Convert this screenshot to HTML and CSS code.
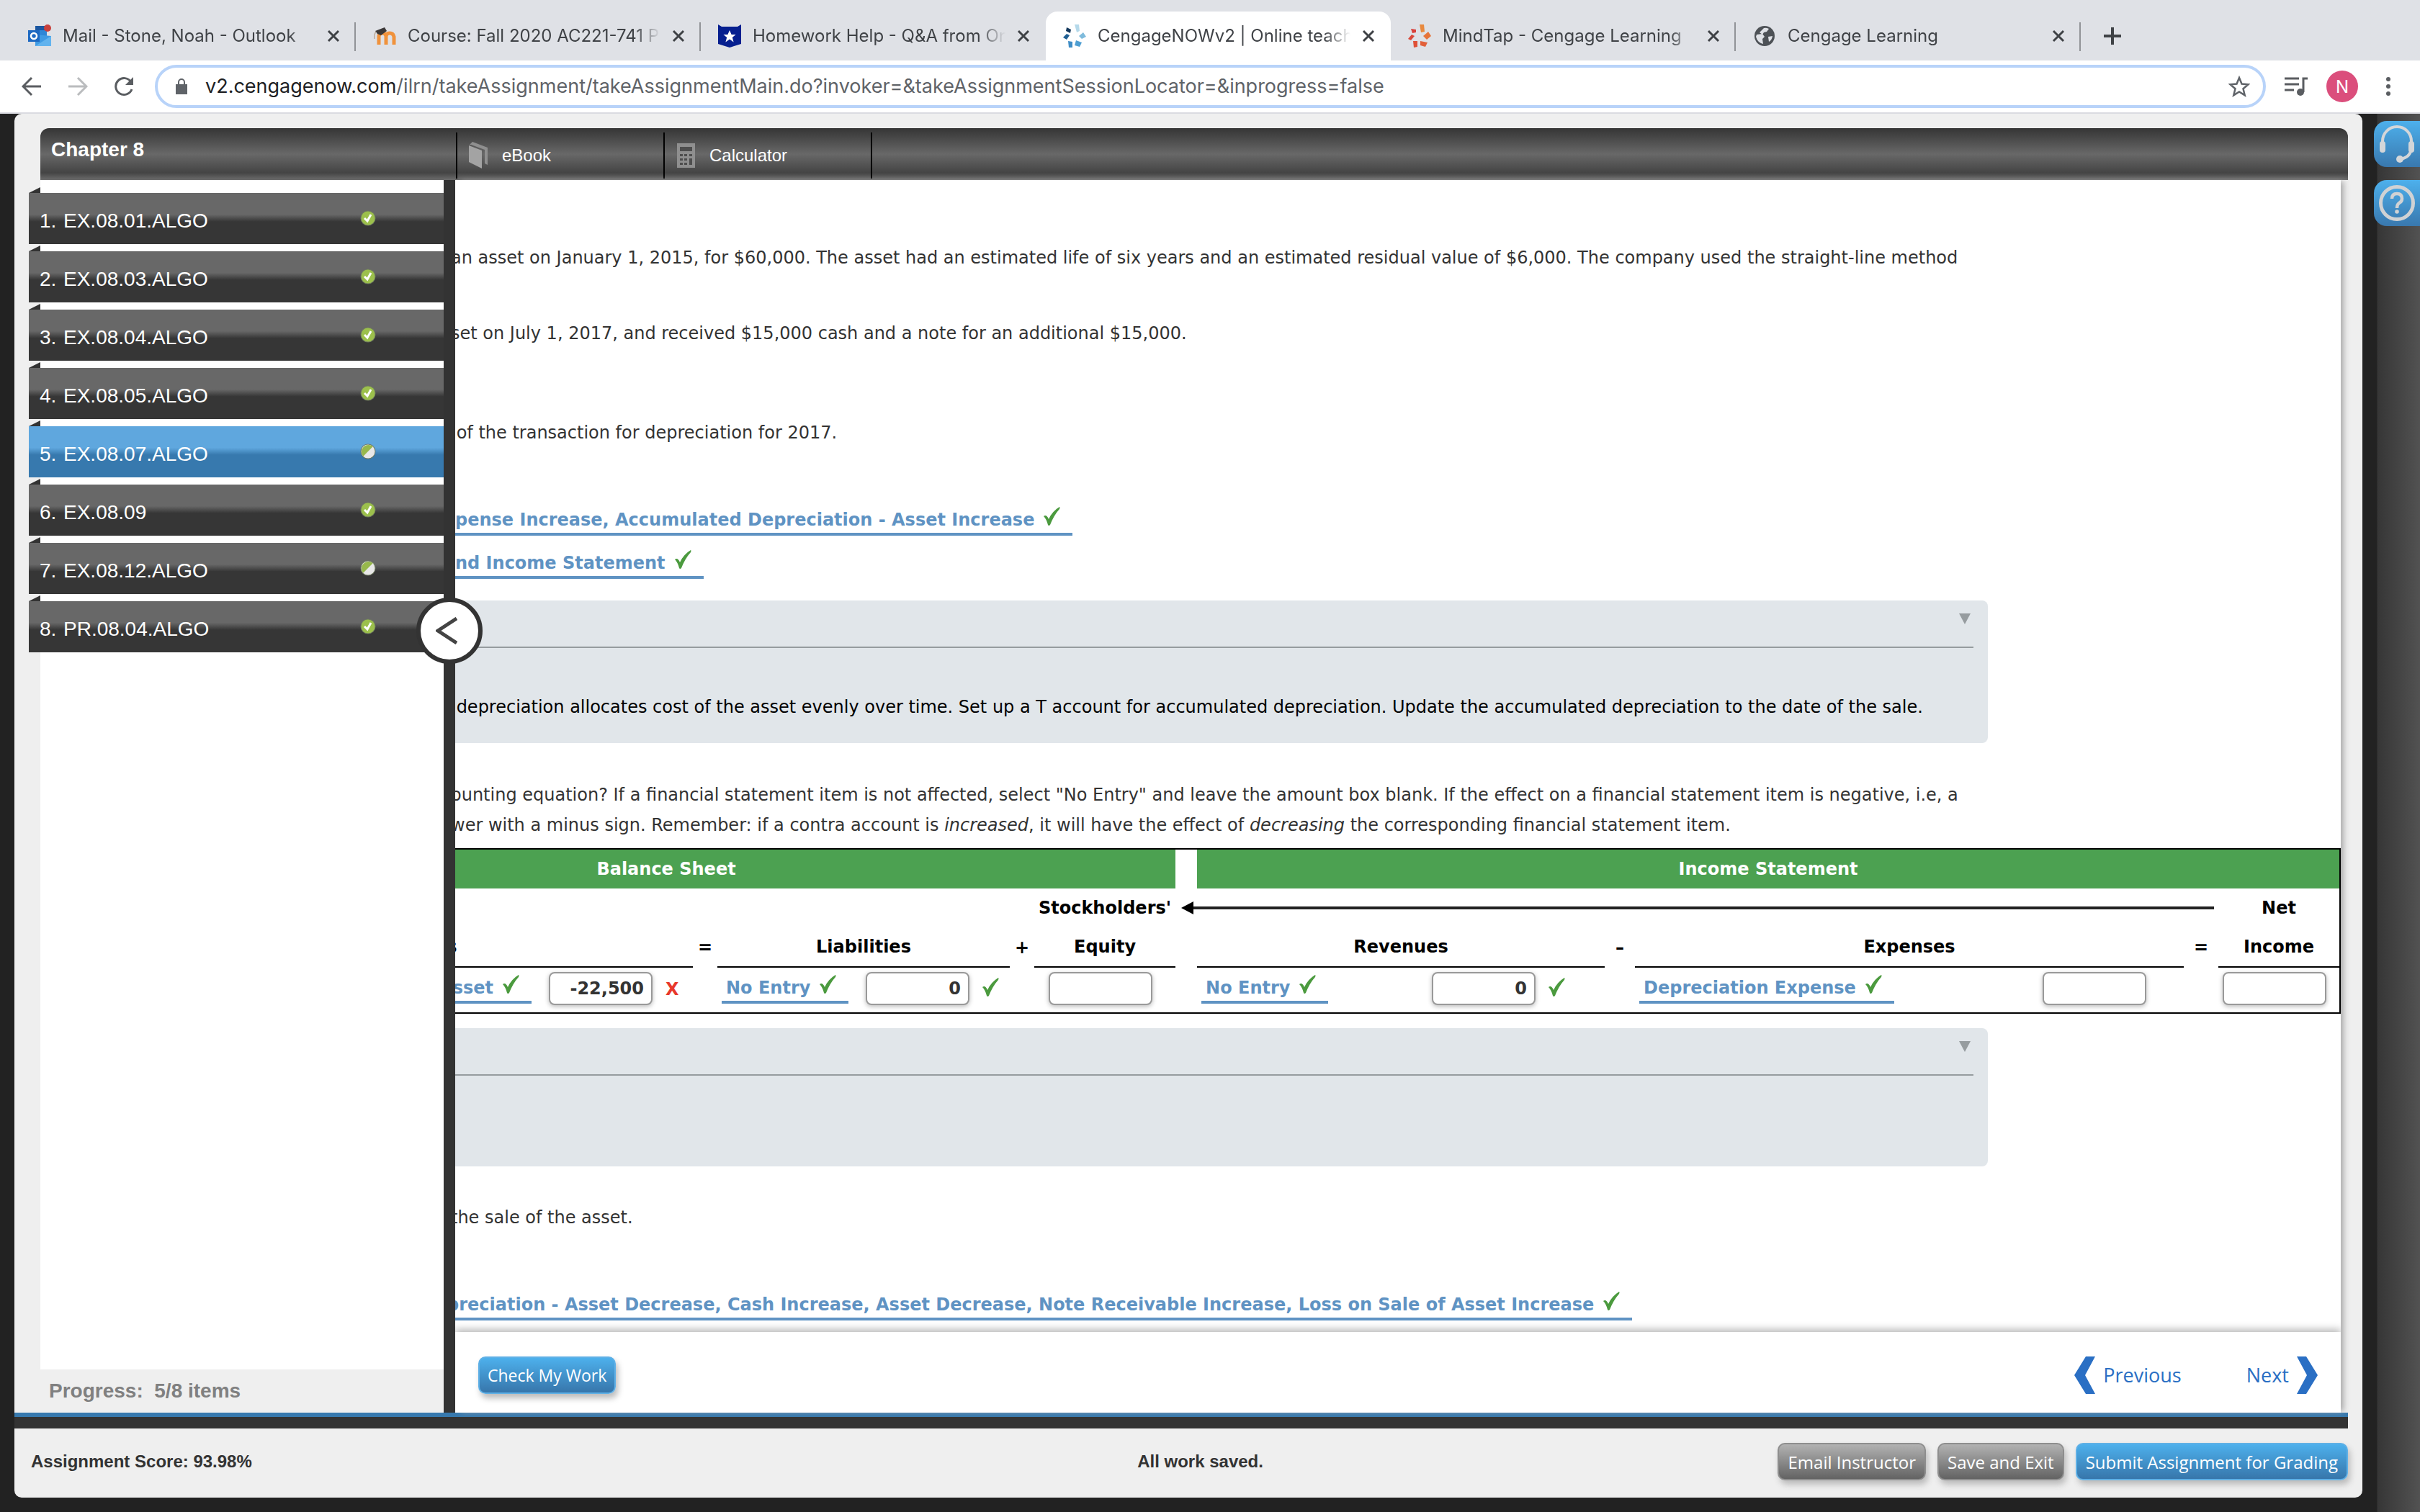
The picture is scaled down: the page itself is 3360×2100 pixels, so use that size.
FILE: index.html
```html
<!DOCTYPE html>
<html lang="en">
<head>
<meta charset="utf-8">
<title>CengageNOWv2 | Online teaching</title>
<link rel="stylesheet" href="styles.css">
</head>
<body>
<svg width="0" height="0" class="defs" aria-hidden="true">
  <symbol id="close" viewBox="0 0 18 18"><path d="M2 2L16 16M16 2L2 16" stroke="#3f4246" stroke-width="3" fill="none"/></symbol>
  <symbol id="check" viewBox="0 0 24 26"><path d="M1 13Q5 10 8 17Q13 6 23 0Q24 1 23 3Q15 12 10 25Q8 27 7 25Q5 17 1 13Z" fill="#4b9a3e"/></symbol>
  <symbol id="done" viewBox="0 0 22 22"><circle cx="11" cy="11" r="10.500" fill="#6f7a60"/><circle cx="11" cy="11" r="9.500" fill="#9cc04c"/><path d="M6 11L10 15L15 6" stroke="#fff" stroke-width="3" fill="none"/></symbol>
  <symbol id="half" viewBox="0 0 22 22"><circle cx="11" cy="11" r="10.500" fill="#6f7a60"/><circle cx="11" cy="11" r="9.500" fill="#e8e8e8"/><path d="M4.300 17.700A9.500 9.500 0 0 1 17.700 4.300Z" fill="#97b84c"/></symbol>
</svg>

<header class="browser">
  <div class="tabs" role="tablist">
    <div class="tab" role="tab">
      <svg class="fav" viewBox="0 0 32 32"><path d="M10 2h16v12H10z" fill="#1a56a0"/><path d="M16 8h10v10H16z" fill="#2f86d6"/><path d="M10 14l22 2v14H10z" fill="#3f9ae3"/><path d="M10 30l22-14v14z" fill="#62b3ee"/><path d="M0 8h16v16H0z" fill="#1d69c2"/><circle cx="8" cy="16" r="4" fill="none" stroke="#fff" stroke-width="2.500"/><circle cx="27" cy="5" r="5" fill="#c9403c"/></svg>
      <span class="title">Mail - Stone, Noah - Outlook</span>
      <button class="close" aria-label="Close tab"><svg viewBox="0 0 18 18"><use href="#close"/></svg></button>
    </div>
    <div class="tab" role="tab">
      <svg class="fav" viewBox="0 0 32 32"><path d="M8 28V17q0-5 5-5t5 5v11M18 17q0-5 5-5t6 5v11" stroke="#f0923c" stroke-width="5" fill="none"/><path d="M3 9L16 4L19 9L11 15L6 13Z" fill="#3b3838"/><path d="M4 10Q1 14 2 20" stroke="#b9a99a" stroke-width="1.500" fill="none"/></svg>
      <span class="title">Course: Fall 2020 AC221-741 P</span>
      <button class="close" aria-label="Close tab"><svg viewBox="0 0 18 18"><use href="#close"/></svg></button>
    </div>
    <div class="tab last-before" role="tab">
      <svg class="fav" viewBox="0 0 32 32"><path d="M0 0L5 3H27L32 0V27L16 32L0 27Z" fill="#061f8f"/><path d="M16 8l2.600 6h6l-4.800 4 1.800 6.500L16 20.500l-5.600 4L12.200 18l-4.800-4h6z" fill="#fff"/></svg>
      <span class="title">Homework Help - Q&amp;A from On</span>
      <button class="close" aria-label="Close tab"><svg viewBox="0 0 18 18"><use href="#close"/></svg></button>
    </div>
    <div class="tab active" role="tab" aria-selected="true">
      <svg class="fav" viewBox="0 0 32 32"><path d="M16 0h6l1 9-4 2z" fill="#b5d9ea"/><path d="M28 11l4 6-6 3-4-4z" fill="#7fbbdc"/><path d="M18 22l8 3-3 6-7-2z" fill="#4f9fd2"/><path d="M7 23l6 1v8H8z" fill="#3f8dc6"/><path d="M0 18l5-5 4 2-4 6z" fill="#1f5f93"/><path d="M5 4l6 3-1 5-6-3z" fill="#14385c"/></svg>
      <span class="title">CengageNOWv2 | Online teach</span>
      <button class="close" aria-label="Close tab"><svg viewBox="0 0 18 18"><use href="#close"/></svg></button>
    </div>
    <div class="tab" role="tab">
      <svg class="fav" viewBox="0 0 32 32"><path d="M16 0h6l1 10-5 1z" fill="#e8893e"/><path d="M28 10l4 6-6 5-5-5z" fill="#e6743a"/><path d="M17 23l10 2-3 6-7-2z" fill="#e2603a"/><path d="M7 23h6v8l-5 1z" fill="#df5138"/><path d="M0 20l5-6 4 2-5 6z" fill="#d9483a"/><path d="M4 6l7 1v4l-5 1z" fill="#d9403a"/></svg>
      <span class="title">MindTap - Cengage Learning</span>
      <button class="close" aria-label="Close tab"><svg viewBox="0 0 18 18"><use href="#close"/></svg></button>
    </div>
    <div class="tab" role="tab">
      <svg class="fav" viewBox="0 0 32 32"><circle cx="16" cy="16" r="14" fill="#4d5156"/><path d="M5 14l8-1 3 4-3 3 1 7Q6 25 4 17zM15 5q3-1 7 1l-3 4-4 1-2 3-4-3zM21 17l6-1q-1 6-5 8z" fill="#dfe1e6"/></svg>
      <span class="title">Cengage Learning</span>
      <button class="close" aria-label="Close tab"><svg viewBox="0 0 18 18"><use href="#close"/></svg></button>
    </div>
    <button class="newtab" aria-label="New tab"><svg viewBox="0 0 24 24"><path d="M12 0v24M0 12h24" stroke="#3f4246" stroke-width="4"/></svg></button>
  </div>
  <div class="toolbar">
    <button class="nav" aria-label="Back"><svg viewBox="0 0 28 28"><path d="M27 14H3M14 2L2 14L14 26" stroke="#5a5d61" stroke-width="3" fill="none"/></svg></button>
    <button class="nav" aria-label="Forward" disabled><svg viewBox="0 0 28 28"><path d="M1 14H25M14 2L26 14L14 26" stroke="#babcbe" stroke-width="3" fill="none"/></svg></button>
    <button class="nav" aria-label="Reload"><svg viewBox="0 0 28 28"><path d="M24 8A11.500 11.500 0 1 0 25 18" stroke="#5a5d61" stroke-width="3" fill="none"/><path d="M27 1V12H16Z" fill="#5a5d61"/></svg></button>
    <div class="omnibox">
      <svg class="lock" viewBox="0 0 16 22"><path d="M0 8h16v14H0z" fill="#5f6368"/><path d="M4 9V5a4 4 0 0 1 8 0v4" stroke="#5f6368" stroke-width="2" fill="none"/></svg>
      <div class="url" role="textbox" aria-label="Address"><b>v2.cengagenow.com</b>/ilrn/takeAssignment/takeAssignmentMain.do?invoker=&amp;takeAssignmentSessionLocator=&amp;inprogress=false</div>
      <button class="star" aria-label="Bookmark"><svg viewBox="0 0 30 30"><path d="M15 3l3.500 8.500 9 .8-7 6 2.200 9L15 22.500 7.300 27.300l2.200-9-7-6 9-.8z" stroke="#5f6368" stroke-width="2.500" fill="none"/></svg></button>
    </div>
    <button class="media" aria-label="Media"><svg viewBox="0 0 32 26"><path d="M0 2h20M0 10h20M0 18h13" stroke="#5a5d61" stroke-width="3"/><path d="M26 21V2h6" stroke="#5a5d61" stroke-width="3" fill="none"/><circle cx="22" cy="21" r="5" fill="#5a5d61"/></svg></button>
    <button class="avatar">N</button>
    <button class="dots" aria-label="Menu"><svg viewBox="0 0 8 28"><circle cx="4" cy="4" r="3"/><circle cx="4" cy="14" r="3"/><circle cx="4" cy="24" r="3"/></svg></button>
  </div>
</header>

<div class="page">
  <div class="shell">
    <nav class="topbar">
      <h1>Chapter 8</h1>
      <a href="#ebook"><svg viewBox="0 0 28 38"><path d="M1 4L5 0L26 8V32L22 30V11L3 4Z" fill="#8f8f8f"/><path d="M0 5L18 12V37L0 28Z" fill="#a3a3a3"/></svg>eBook</a>
      <a href="#calc"><svg viewBox="0 0 28 38"><path d="M1 2h25v34H1z" fill="#8f8f8f"/><path d="M5 7h17v6H5zM5 17h4v3H5zM11 17h4v3h-4zM18 17h4v3h-4zM5 23h4v3H5zM11 23h4v3h-4zM18 23h4v9h-4zM5 29h4v3H5zM11 29h4v3h-4z" fill="#4e4e4e"/></svg>Calculator</a>
    </nav>

    <div class="body">
      <aside class="side">
        <ol class="items">
          <li><a href="#1"><span>1.</span>EX.08.01.ALGO<svg viewBox="0 0 22 22"><use href="#done"/></svg></a></li>
          <li><a href="#2"><span>2.</span>EX.08.03.ALGO<svg viewBox="0 0 22 22"><use href="#done"/></svg></a></li>
          <li><a href="#3"><span>3.</span>EX.08.04.ALGO<svg viewBox="0 0 22 22"><use href="#done"/></svg></a></li>
          <li><a href="#4"><span>4.</span>EX.08.05.ALGO<svg viewBox="0 0 22 22"><use href="#done"/></svg></a></li>
          <li class="current"><a href="#5"><span>5.</span>EX.08.07.ALGO<svg viewBox="0 0 22 22"><use href="#half"/></svg></a></li>
          <li><a href="#6"><span>6.</span>EX.08.09<svg viewBox="0 0 22 22"><use href="#done"/></svg></a></li>
          <li><a href="#7"><span>7.</span>EX.08.12.ALGO<svg viewBox="0 0 22 22"><use href="#half"/></svg></a></li>
          <li><a href="#8"><span>8.</span>PR.08.04.ALGO<svg viewBox="0 0 22 22"><use href="#done"/></svg></a></li>
        </ol>
        <p class="progress">Progress:&nbsp; 5/8 items</p>
        <button class="collapse" aria-label="Collapse list"><svg viewBox="0 0 30 38"><path d="M29 2L3 19L29 36" stroke="#444" stroke-width="5" fill="none"/></svg></button>
      </aside>

      <main class="main">
        <div class="pane">
          <p class="line">an asset on January 1, 2015, for $60,000. The asset had an estimated life of six years and an estimated residual value of $6,000. The company used the straight-line method</p>
          <p class="line second">set on July 1, 2017, and received $15,000 cash and a note for an additional $15,000.</p>
          <p class="line third"> of the transaction for depreciation for 2017.</p>
          <div class="answers">
            <span class="answer">pense Increase, Accumulated Depreciation - Asset Increase<svg viewBox="0 0 24 26"><use href="#check"/></svg></span>
            <span class="answer">nd Income Statement<svg viewBox="0 0 24 26"><use href="#check"/></svg></span>
          </div>
          <section class="feedback first">
            <div class="bar"><button aria-label="Toggle feedback"></button></div>
            <p> depreciation allocates cost of the asset evenly over time. Set up a T account for accumulated depreciation. Update the accumulated depreciation to the date of the sale.</p>
          </section>
          <p class="line fourth">ounting equation? If a financial statement item is not affected, select "No Entry" and leave the amount box blank. If the effect on a financial statement item is negative, i.e, a<br>wer with a minus sign. Remember: if a contra account is <i>increased</i>, it will have the effect of <i>decreasing</i> the corresponding financial statement item.</p>

          <table class="equation">
            <colgroup><col class="c-assets"><col class="c-op"><col class="c-liab"><col class="c-op"><col class="c-equity"><col class="c-gap"><col class="c-rev"><col class="c-minus"><col><col class="c-eq2"><col class="c-net"></colgroup>
            <tr class="groups"><th colspan="5">Balance Sheet</th><td></td><th colspan="5">Income Statement</th></tr>
            <tr class="heads"><td colspan="4"></td><th>Stockholders'</th><td colspan="5"><div class="arrow"></div></td><th>Net</th></tr>
            <tr class="heads"><th class="u">Assets</th><th>=</th><th class="u">Liabilities</th><th>+</th><th class="u">Equity</th><td></td><th class="u">Revenues</th><th>–</th><th class="u">Expenses</th><th>=</th><th class="u">Income</th></tr>
            <tr class="entries">
              <td><div class="cell end"><span class="answer">Asset<svg viewBox="0 0 24 26"><use href="#check"/></svg></span><input type="text" value="-22,500" aria-label="Assets amount"><span class="wrong">X</span></div></td>
              <td></td>
              <td><div class="cell"><span class="answer">No Entry<svg viewBox="0 0 24 26"><use href="#check"/></svg></span><input type="text" value="0" aria-label="Liabilities amount"><svg class="mark" viewBox="0 0 24 26"><use href="#check"/></svg></div></td>
              <td></td>
              <td><div class="cell equity"><input type="text" aria-label="Equity amount"></div></td>
              <td></td>
              <td><div class="cell rev"><span class="answer">No Entry<svg viewBox="0 0 24 26"><use href="#check"/></svg></span><input type="text" value="0" aria-label="Revenues amount"><svg class="mark" viewBox="0 0 24 26"><use href="#check"/></svg></div></td>
              <td></td>
              <td><div class="cell exp"><span class="answer">Depreciation Expense<svg viewBox="0 0 24 26"><use href="#check"/></svg></span><input type="text" aria-label="Expenses amount"></div></td>
              <td></td>
              <td><div class="cell"><input type="text" aria-label="Net income amount"></div></td>
            </tr>
          </table>

          <section class="feedback">
            <div class="bar"><button aria-label="Toggle feedback"></button></div>
          </section>
          <p class="line fifth">the sale of the asset.</p>
          <div class="answers long">
            <span class="answer">preciation - Asset Decrease, Cash Increase, Asset Decrease, Note Receivable Increase, Loss on Sale of Asset Increase<svg viewBox="0 0 24 26"><use href="#check"/></svg></span>
          </div>
        </div>
        <div class="controls">
          <button class="btn blue">Check My Work</button>
          <div class="pager">
            <a href="#prev"><svg viewBox="0 0 30 52"><path d="M16 0H29L15 26L29 52H16L0 26Z" fill="#2a6fc4"/></svg>Previous</a>
            <a href="#next">Next<svg viewBox="0 0 30 52"><path d="M14 0H1L15 26L1 52H14L30 26Z" fill="#2a6fc4"/></svg></a>
          </div>
        </div>
      </main>
    </div>

    <footer class="status">
      <span>Assignment Score: 93.98%</span>
      <span>All work saved.</span>
      <div class="actions">
        <button class="btn">Email Instructor</button>
        <button class="btn">Save and Exit</button>
        <button class="btn blue">Submit Assignment for Grading</button>
      </div>
    </footer>
  </div>
  <aside class="rail">
    <button aria-label="Support"><svg viewBox="0 0 50 52"><path d="M5 28V22A20 20 0 0 1 45 22V30Q45 44 30 47" stroke="#d3d6d9" stroke-width="4" fill="none"/><rect x="1" y="22" width="8" height="16" rx="4" fill="#d3d6d9"/><rect x="41" y="22" width="8" height="16" rx="4" fill="#d3d6d9"/><circle cx="29" cy="47" r="5" fill="#d3d6d9"/></svg></button>
    <button aria-label="Help"><svg viewBox="0 0 50 52"><circle cx="25" cy="26" r="22.500" stroke="#d0d2d4" stroke-width="5" fill="none"/><path d="M18 20Q18 13 25 13T32 20Q32 24 28 26Q25 28 25 33" stroke="#d0d2d4" stroke-width="4.500" fill="none"/><circle cx="25" cy="38" r="2.800" fill="#d0d2d4"/></svg></button>
  </aside>
</div>
</body>
</html>
```
FILE: styles.css
```css
* { box-sizing: border-box; }
body { margin: 0; background: #222; color: #333; font: 24px "DejaVu Sans", Verdana, sans-serif; }
button { border: 0; padding: 0; background: none; font: inherit; color: inherit; display: flex; align-items: center; justify-content: center; flex: none; }
p, h1, ol { margin: 0; padding: 0; }
svg { display: block; flex: none; }
a { text-decoration: none; }
.defs { position: absolute; }

/* Browser chrome */
.browser { font-family: Inter, sans-serif; background: #fff; border-bottom: 2px solid #dadbe1; }
.tabs { display: flex; height: 84px; padding: 16px 16px 0 15px; background: #dfe1e6; }
.tab { position: relative; flex: 0 1 479px; min-width: 0; display: flex; align-items: center; gap: 16px; padding: 0 22px 0 24px; color: #3f4246; }
.tab::after { content: ""; position: absolute; right: 0; top: 15px; width: 2px; height: 40px; background: #919397; }
.tab.active::after, .last-before::after { display: none; }
.tab.active { background: #fff; border-radius: 16px 16px 0 0; }
.fav { width: 32px; height: 32px; }
.title { flex: 1; min-width: 0; overflow: hidden; white-space: nowrap; line-height: 36px; mask-image: linear-gradient(to left, transparent, #000 36px); }
.close svg { width: 18px; height: 18px; }
.newtab { padding: 0 32px; }
.newtab svg { width: 24px; height: 24px; }
.toolbar { display: flex; align-items: center; height: 72px; padding: 0 40px 0 30px; }
.nav { width: 28px; margin-right: 36px; }
.nav svg { width: 28px; height: 28px; }
.omnibox { flex: 1; min-width: 0; height: 60px; display: flex; align-items: center; border: 4px solid #b8d3f9; border-radius: 30px; padding: 0 18px 0 25px; margin: 0 26px 0 -7px; }
.lock { width: 16px; height: 22px; margin-right: 25px; }
.url { flex: 1; min-width: 0; overflow: hidden; white-space: nowrap; font-size: 27px; line-height: 40px; color: #5f6368; }
.url b { font-weight: 400; color: #202124; }
.star svg { width: 30px; height: 30px; }
.media svg { width: 32px; height: 26px; }
.avatar { width: 44px; height: 44px; margin: 0 38px 0 26px; border-radius: 50%; background: #db4e7c; color: #fff; font-size: 24px; }
.dots svg { width: 8px; height: 28px; fill: #5a5d61; }

/* Page frame */
.page { display: flex; padding-left: 20px; min-height: calc(100vh - 158px); }
.shell { flex: 1; min-width: 0; margin-bottom: 20px; padding-top: 20px; background: #efefef; border-radius: 10px; display: flex; flex-direction: column; }
.rail { width: 80px; padding-top: 10px; display: flex; flex-direction: column; align-items: flex-end; gap: 18px; background: linear-gradient(to right, #222 20px, #363636 21px, #525252); }
.rail button { width: 64px; height: 64px; border-radius: 18px 0 0 18px; background: linear-gradient(#4db0ec, #3978ae); }
.rail svg { width: 50px; height: 52px; }

.topbar { display: flex; height: 72px; margin: 0 20px 0 36px; border-radius: 12px 12px 0 0; background: linear-gradient(#353535, #686868 50%, #444 86%, #6c6c6c); color: #fff; font-family: "Liberation Sans", Arial, sans-serif; }
.topbar h1 { width: 577px; padding: 14px 15px; font-size: 28px; line-height: 32px; }
.topbar a { width: 288px; margin: 6px 0 2px; padding-left: 16px; display: flex; align-items: center; gap: 18px; color: #fff; border-left: 2px solid #000; }
.topbar a:last-child { width: 290px; border-right: 2px solid #000; }
.topbar svg { width: 28px; height: 38px; }

.body { flex: 1; display: flex; border-bottom: 6px solid #3779ae; margin-right: 20px; }
.side { position: relative; width: 612px; border-right: 16px solid #333; padding-left: 36px; display: flex; flex-direction: column; font-family: "Liberation Sans", Arial, sans-serif; }
.items { flex: 1; list-style: none; background: #fff; padding-top: 18px; display: flex; flex-direction: column; gap: 10px; }
.items li { position: relative; margin-left: -16px; }
.items li::before { content: ""; position: absolute; left: 0; top: -8px; width: 16px; height: 8px; background: #333; clip-path: polygon(0 100%, 100% 0, 100% 100%); }
.items a { display: flex; align-items: center; height: 71px; padding: 6px 94px 0 15px; font-size: 28px; color: #fff; background: linear-gradient(#686868 42%, #363636 56%); }
.items span { width: 33px; }
.items svg { width: 22px; height: 22px; margin: 0 0 8px auto; }
.items .current a { background: linear-gradient(#5fa7de 42%, #3779ae 56%); }
.progress { height: 60px; padding: 0 12px; font-size: 28px; line-height: 60px; font-weight: 700; color: #808080; }
.collapse { position: absolute; z-index: 2; right: -54px; top: 580px; width: 92px; height: 92px; border: 6px solid #333; border-radius: 50%; background: #fff; }
.collapse svg { width: 30px; height: 38px; margin-right: 8px; }

/* Question content */
.main { flex: 1; min-width: 0; margin-right: 10px; background: #fff; display: flex; flex-direction: column; box-shadow: 6px 0 8px -2px #aaa; }
.pane { flex: 1; overflow: hidden; padding: 87px 0 16px; }
.line, .feedback p { white-space: pre; line-height: 42px; margin-left: -6px; }
.second { margin-top: 63px; }
.third { margin-top: 96px; }
.fourth { margin-top: 51px; }
.fifth { margin-top: 50px; }
.answers { display: flex; flex-direction: column; align-items: flex-start; gap: 20px; margin: 82px 0 0 -6px; }
.answers.long { margin-left: -18px; }
.answer { display: flex; gap: 12px; padding: 0 17px 0 6px; border-bottom: 4px solid #5f93c3; color: #5f93c3; font-weight: 700; line-height: 36px; white-space: nowrap; }
.answer svg, .mark { width: 24px; height: 26px; }
.feedback { margin: 20px 490px 0 0; height: 192px; background: #e1e6ea; border-radius: 0 8px 8px 0; color: #000; }
.feedback.first { margin-top: 30px; height: 198px; }
.bar { height: 66px; margin-right: 20px; border-bottom: 2px solid #969c9f; display: flex; justify-content: flex-end; align-items: flex-start; padding: 18px 4px; }
.bar button { border: solid transparent; border-width: 15px 8px 0; border-top-color: #969c9f; }
.feedback p { padding-top: 61px; }

.equation { table-layout: fixed; width: calc(100% + 416px); margin: 11px 0 0 -416px; border-collapse: separate; border-spacing: 0; border: 2px solid #000; color: #000; }
.equation td, .equation th { padding: 0; line-height: 54px; height: 54px; }
.groups th { background: #4ca151; color: #fff; }
.heads .u { border-bottom: 2px solid #000; height: 56px; }
.c-assets { width: 744px; }
.c-op { width: 34px; }
.c-liab { width: 406px; }
.c-equity { width: 196px; }
.c-gap { width: 30px; }
.c-rev { width: 566px; }
.c-minus { width: 42px; }
.c-eq2 { width: 48px; }
.c-net { width: 168px; }
.arrow { position: relative; height: 4px; margin: 0 6px 0 20px; background: #222; }
.arrow::before { content: ""; position: absolute; left: -12px; top: -7px; border: solid transparent; border-width: 9px 17px 9px 0; border-right-color: #000; }
.cell { position: relative; display: flex; align-items: flex-start; height: 62px; padding: 6px 6px 0; }
.cell .answer { padding-top: 4px; }
.cell input { width: 144px; height: 46px; margin: 0 0 0 auto; padding: 0 10px; border: 2px solid #999; border-radius: 8px; background: #fff; box-shadow: 0 2px 6px #bbb; color: #333; font: 700 24px "DejaVu Sans", Verdana, sans-serif; text-align: right; }
.cell .mark { margin: 8px 9px 0 17px; }
.cell.end { justify-content: flex-end; padding-right: 14px; }
.cell.end input { margin-left: 24px; }
.wrong { width: 24px; margin-left: 18px; line-height: 48px; font-weight: 700; color: #e8382b; }
.cell.equity { padding-right: 32px; }
.cell.rev .mark { margin-right: 49px; }
.cell.exp { padding-right: 52px; }
.equation td:last-child .cell input { margin: 0; }

.controls { position: relative; height: 112px; padding: 8px 32px 0; display: flex; align-items: center; justify-content: space-between; background: #fff; box-shadow: 0 -4px 10px #bbb; clip-path: inset(-20px 0 0 0); }
.controls .btn { font-size: 23px; padding: 0 11px; }
.pager { display: flex; gap: 90px; }
.pager a { display: flex; align-items: center; gap: 10px; font: 27px/52px "Open Sans", sans-serif; color: #2a6fc4; }
.pager svg { width: 30px; height: 52px; }
.btn { height: 52px; padding: 0 12px; border: 2px solid #8e8e8e; border-radius: 10px; background: linear-gradient(#b2b2b2, #636363); box-shadow: 3px 6px 8px #bbb; color: #fff; font: 24px "Open Sans", sans-serif; }
.btn.blue { border-color: #5fb0e6; background: linear-gradient(#4db0ec, #3776ab); }

.status { height: 112px; margin-right: 20px; border-top: 16px solid #333; padding: 0 0 4px 23px; display: grid; grid-template-columns: 51fr auto 50fr; align-items: center; color: #333; font: 700 24px "Liberation Sans", Arial, sans-serif; }
.actions { display: flex; justify-content: flex-end; gap: 16px; }
.status > span { min-width: 0; }
.status > * { white-space: nowrap; }
.status > :first-child, .status > .actions { width: 0; min-width: 100%; }
```
